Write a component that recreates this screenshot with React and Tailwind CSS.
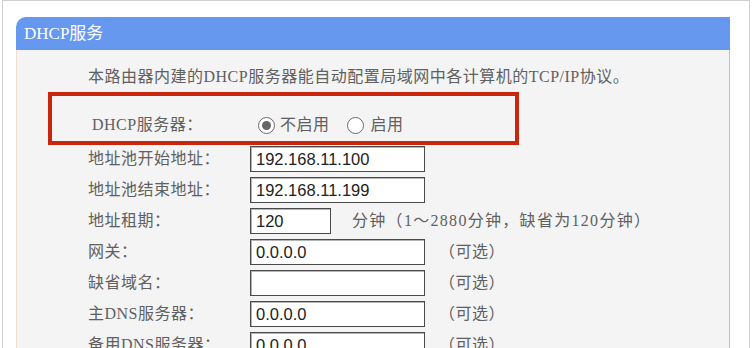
export default function App() {
  const rows = [
    { label: "地址池开始地址：", value: "192.168.11.100", w: "w-[175px]" },
    { label: "地址池结束地址：", value: "192.168.11.199", w: "w-[175px]" },
    { label: "地址租期：", value: "120", w: "w-[81px]", after: "分钟（1～2880分钟，缺省为120分钟）", gap: "ml-[21px] tracking-[1.3px]" },
    { label: "网关：", value: "0.0.0.0", w: "w-[175px]", after: "（可选）", gap: "ml-[14px] tracking-[0.5px]" },
    { label: "缺省域名：", value: "", w: "w-[175px]", after: "（可选）", gap: "ml-[14px] tracking-[0.5px]" },
    { label: "主DNS服务器：", value: "0.0.0.0", w: "w-[175px]", after: "（可选）", gap: "ml-[14px] tracking-[0.5px]" },
    { label: "备用DNS服务器：", value: "0.0.0.0", w: "w-[175px]", after: "（可选）", gap: "ml-[14px] tracking-[0.5px]" },
  ];
  return (
    <div className="w-[752px] h-[348px] overflow-hidden bg-white font-['Liberation_Serif','Noto_Sans_CJK_SC',serif] text-[#606060]">
      <div className="ml-[2px] w-[748px] h-[348px] border-t border-l border-r border-[#cfcfcf] pt-[16px] pl-[13px]">
        <div className="w-[714px]">
          <div className="h-[33px] bg-[#6698f0] rounded-tl-[10px] flex items-center pl-[8px] text-white text-[17px] leading-[20px]">
            DHCP服务
          </div>
          <div className="bg-[#f4f4f4] border-l border-r border-l-[#eee0cc] border-r-[#d9b98f] h-[300px] pl-[31px] pt-[15px]">
            <div className="ml-[40px] h-[24px] leading-[24px] text-[16px] whitespace-nowrap tracking-[0.5px]">
              本路由器内建的DHCP服务器能自动配置局域网中各计算机的TCP/IP协议。
            </div>
            <div className="mt-[3px] w-[471px] h-[53px] border-4 border-[#c9260e] pt-[13px] pl-[40px] flex items-center text-[16px] leading-[24px] box-border tracking-[0.5px]">
              <div className="w-[166px] whitespace-nowrap">DHCP服务器：</div>
              <div className="flex items-center">
                <span className="w-[17px] h-[17px] rounded-full border-[1.5px] border-[#6a6a6a] bg-white flex items-center justify-center">
                  <span className="w-[9px] h-[9px] rounded-full bg-[#666]"></span>
                </span>
                <span className="ml-[5px]">不启用</span>
                <span className="ml-[17px] w-[17px] h-[17px] rounded-full border-[1.5px] border-[#6a6a6a] bg-white"></span>
                <span className="ml-[7px]">启用</span>
              </div>
            </div>
            <div className="mt-[1px] ml-[40px] flex flex-col gap-[5px]">
              {rows.map((r, i) => (
                <div key={i} className="h-[26px] flex items-center text-[16px] leading-[24px]">
                  <div className="w-[162px] whitespace-nowrap tracking-[0.5px]">{r.label}</div>
                  <div className={`${r.w} h-[26px] bg-white border border-[#4a4a4a] shadow-[inset_1px_1px_0_#b5b5b5] pl-[5px] flex items-center font-['Liberation_Sans',sans-serif] text-[16.5px] text-[#222]`}>
                    {r.value}
                  </div>
                  {r.after && <div className={`${r.gap} whitespace-nowrap`}>{r.after}</div>}
                </div>
              ))}
            </div>
          </div>
        </div>
      </div>
    </div>
  );
}
